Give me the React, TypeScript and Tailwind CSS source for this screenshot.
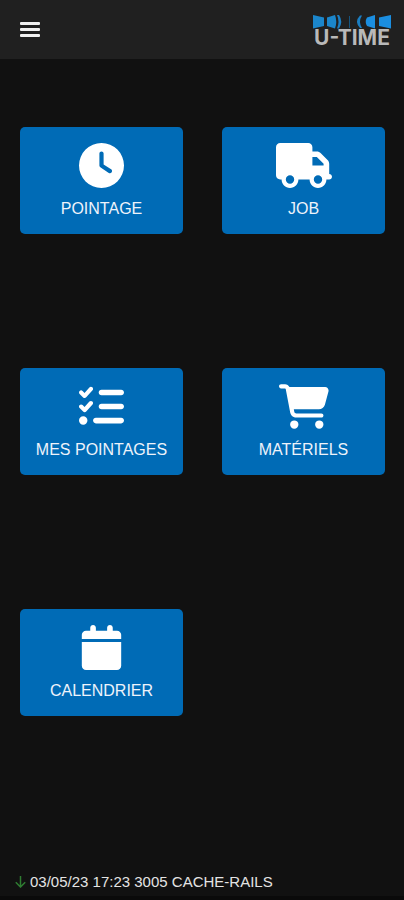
import type { IconType } from "react-icons";
import {
  FaCalendar,
  FaCartShopping,
  FaClock,
  FaListCheck,
  FaTruck,
} from "react-icons/fa6";

type Tile = { label: string; icon: IconType; iconWidth: string };

const tiles: Tile[] = [
  { label: "POINTAGE", icon: FaClock, iconWidth: "w-[45px]" },
  { label: "JOB", icon: FaTruck, iconWidth: "w-14" },
  { label: "MES POINTAGES", icon: FaListCheck, iconWidth: "w-[45px]" },
  { label: "MATÉRIELS", icon: FaCartShopping, iconWidth: "w-[50px]" },
  { label: "CALENDRIER", icon: FaCalendar, iconWidth: "w-[45px]" },
];

function Logo() {
  return (
    <div className="flex w-20 flex-col items-center pt-px">
      <svg viewBox="0 0 78 14" className="h-[14px] w-[78px]" aria-hidden="true">
        <path d="M0 0 L11 2.5 V11 L0 13.5Z" fill="#1b86cb" />
        <path d="M14 2.5 L22 0 Q24.5 6.7 22 13.5 L14 11Z" fill="#1b86cb" />
        <path d="M24 0 Q27 6.7 24 13.5 H26 Q30.5 6.7 26 0Z" fill="#1b7ec2" />
        <path d="M36 1 H37 V13 H36Z" fill="#15547f" />
        <path d="M47 0.5 Q41 6.7 47 13 H49 Q45 6.7 49 0.5Z" fill="#1b7ec2" />
        <path d="M62 0 L54 2.5 Q51.5 6.7 54 11 L62 13.5Z" fill="#1b8ee0" />
        <path d="M78 0 L66 2.5 V11 L78 13.5Z" fill="#1b8ee0" />
      </svg>
      <span className="mt-px font-['Inter',sans-serif] text-[21px] leading-4 font-bold whitespace-nowrap text-[#b9b9b9]">
        U-TIME
      </span>
    </div>
  );
}

export default function App() {
  return (
    <div className="flex min-h-screen flex-col bg-[#111111] font-['Liberation_Sans',Arial,sans-serif] text-white">
      <header className="flex h-[59px] items-center justify-between bg-[#202020] pr-3 pl-5">
        <button
          type="button"
          aria-label="Menu"
          className="flex w-5 flex-col gap-[3px]"
        >
          <span className="h-[3px] w-full rounded-[1px] bg-[#f0f0f0]" />
          <span className="h-[3px] w-full rounded-[1px] bg-[#f0f0f0]" />
          <span className="h-[3px] w-full rounded-[1px] bg-[#f0f0f0]" />
        </button>
        <Logo />
      </header>

      <main className="grid flex-1 grid-cols-2 content-start gap-x-[39px] gap-y-[134px] pt-[68px] pr-[19px] pl-5">
        {tiles.map(({ label, icon: Icon, iconWidth }) => (
          <button
            key={label}
            type="button"
            className="flex h-[107px] flex-col items-center rounded-[5px] bg-[#006bb6] pt-4"
          >
            <Icon className={`h-[45px] ${iconWidth}`} />
            <span className="mt-[11px] text-base leading-5 whitespace-nowrap text-[#eef3fb]">
              {label}
            </span>
          </button>
        ))}
      </main>

      <footer className="flex h-8 items-center gap-1 border-b-4 border-[#0a0a0a] pl-[15px] text-[15px] leading-5 text-[#e4e4e4]">
        <svg
          viewBox="0 0 11 12"
          className="h-3 w-[11px]"
          fill="none"
          stroke="#2f7d32"
          strokeWidth="1.5"
          aria-hidden="true"
        >
          <path d="M5.5 0 V11 M0.8 6.2 L5.5 11 L10.2 6.2" />
        </svg>
        <span>03/05/23 17:23 3005 CACHE-RAILS</span>
      </footer>
    </div>
  );
}
